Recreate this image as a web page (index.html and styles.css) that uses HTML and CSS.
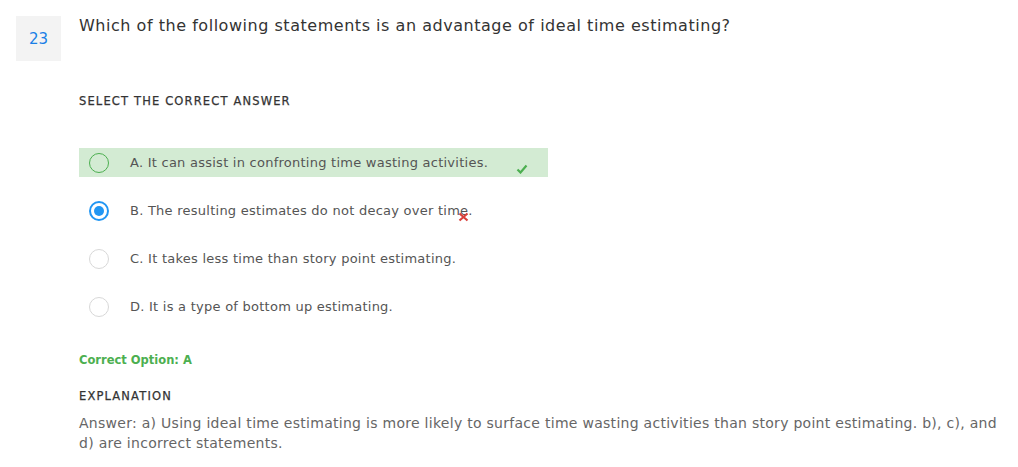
FILE: index.html
```html
<!DOCTYPE html>
<html>
<head>
<meta charset="utf-8">
<link rel="stylesheet" href="styles.css">
</head>
<body>
<div class="question">
  <div class="qnum">23</div>
  <div class="qbody">
    <div class="qtext">Which of the following statements is an advantage of ideal time estimating?</div>
    <div class="label select-label">SELECT THE CORRECT ANSWER</div>
    <div class="options">
      <div class="option correct">
        <span class="radio radio-green"></span>
        <span class="otext">A. It can assist in confronting time wasting activities.</span>
        <svg class="check" width="12" height="10" viewBox="0 0 12 10"><path d="M1.5 5.5 L4.5 8.5 L10.5 1.5" fill="none" stroke="#4caf50" stroke-width="2.2"/></svg>
      </div>
      <div class="option">
        <span class="radio radio-blue"><span class="dot"></span></span>
        <span class="otext wrong">B. The resulting estimates do not decay over time.<svg class="cross" width="11" height="10" viewBox="0 0 11 10"><path d="M1.5 1.5 L9.5 8.5 M9.5 1.5 L1.5 8.5" stroke="#d9413b" stroke-width="2.2"/></svg></span>
      </div>
      <div class="option">
        <span class="radio"></span>
        <span class="otext">C. It takes less time than story point estimating.</span>
      </div>
      <div class="option">
        <span class="radio"></span>
        <span class="otext">D. It is a type of bottom up estimating.</span>
      </div>
    </div>
    <div class="correct-opt">Correct Option: A</div>
    <div class="label expl-label">EXPLANATION</div>
    <div class="expl">Answer: a) Using ideal time estimating is more likely to surface time wasting activities than story point estimating. b), c), and d) are incorrect statements.</div>
  </div>
</div>
</body>
</html>
```

FILE: styles.css
```css
html, body {
  margin: 0;
  padding: 0;
  background: #ffffff;
}
body {
  font-family: "DejaVu Sans", sans-serif;
  color: #333;
}
.question {
  display: flex;
  padding: 16px 0 0 16px;
}
.qnum {
  width: 45px;
  height: 45px;
  flex: none;
  background: #f3f3f3;
  color: #1a7fe6;
  font-size: 15px;
  display: flex;
  align-items: center;
  justify-content: center;
}
.qbody {
  margin-left: 18px;
  width: 925px;
}
.qtext {
  font-size: 16px;
  line-height: 20px;
  letter-spacing: 0.53px;
  color: #333;
  margin-top: 0;
}
.label {
  font-size: 11.5px;
  font-weight: normal;
  color: #333;
  letter-spacing: 1.15px;
  -webkit-text-stroke: 0.25px #333;
}
.select-label {
  margin-top: 58px;
}
.options {
  margin-top: 40px;
  display: flex;
  flex-direction: column;
  gap: 19px;
}
.option {
  height: 29px;
  width: 469px;
  display: flex;
  align-items: center;
  position: relative;
}
.option.correct {
  background: #d3ebd3;
}
.radio {
  box-sizing: border-box;
  width: 20px;
  height: 20px;
  border-radius: 50%;
  border: 1px solid #d8d8d8;
  background: #fff;
  margin-left: 10px;
  display: flex;
  align-items: center;
  justify-content: center;
  flex: none;
}
.radio-green {
  border: 1.5px solid #4caf50;
  background: transparent;
}
.radio-blue {
  border: 2px solid #2196f3;
}
.dot {
  width: 10px;
  height: 10px;
  border-radius: 50%;
  background: #2196f3;
}
.otext {
  margin-left: 21px;
  font-size: 13px;
  letter-spacing: 0.25px;
  color: #555;
  position: relative;
}
.check {
  position: absolute;
  left: 437px;
  top: 16px;
}
.cross {
  position: absolute;
  right: 4px;
  top: 9px;
}
.correct-opt {
  margin-top: 32px;
  font-size: 11.5px;
  font-weight: bold;
  letter-spacing: 0;
  color: #4caf50;
}
.expl-label {
  margin-top: 22px;
}
.expl {
  margin-top: 10px;
  font-size: 14px;
  line-height: 20px;
  letter-spacing: 0.28px;
  color: #666;
}
```
